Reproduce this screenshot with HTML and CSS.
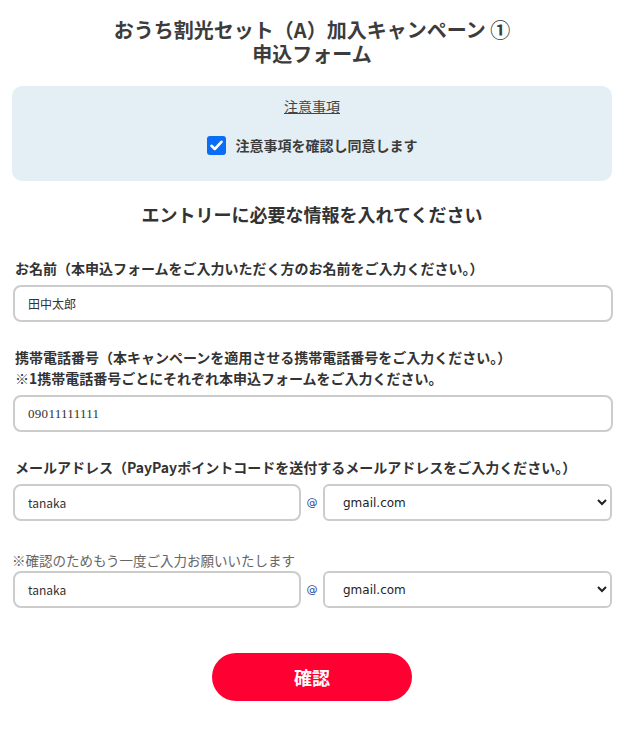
FILE: index.html
```html
<!DOCTYPE html>
<html lang="ja">
<head>
  <meta charset="UTF-8" />
  <meta name="viewport" content="width=device-width, initial-scale=1.0"/>
  <title>申込フォーム</title>
  <link rel="stylesheet" href="styles.css">
</head>
<body>
  <div class="page">
    <h1 class="page-title"><span>おうち割光セット（A）加入キャンペーン ①</span><span>申込フォーム</span></h1>

    <!-- 注意事項 -->
    <div class="notice">
      <a href="#" class="notice-link">注意事項</a>
      <label class="agree">
        <span class="check">
          <svg width="13" height="11" viewBox="0 0 13 11"><path d="M1.5 5.8 L4.8 9 L11.5 1.8" fill="none" stroke="#fff" stroke-width="2.6" stroke-linecap="round" stroke-linejoin="round"/></svg>
        </span>
        注意事項を確認し同意します
      </label>
    </div>

    <h2 class="section-title">エントリーに必要な情報を入れてください</h2>

    <form class="entry-form">
      <div class="field">
        <label class="field-label" for="name">お名前（本申込フォームをご入力いただく方のお名前をご入力ください。）</label>
        <input type="text" id="name" class="text-input" value="田中太郎" />
      </div>

      <div class="field">
        <label class="field-label" for="tel">携帯電話番号（本キャンペーンを適用させる携帯電話番号をご入力ください。）<br>※1携帯電話番号ごとにそれぞれ本申込フォームをご入力ください。</label>
        <input type="tel" id="tel" class="text-input tel-input" value="09011111111" />
      </div>

      <div class="field">
        <label class="field-label" for="mail">メールアドレス（PayPayポイントコードを送付するメールアドレスをご入力ください。）</label>
        <div class="mail-row">
          <input type="text" id="mail" class="text-input mail-input" value="tanaka" />
          <span class="at">@</span>
          <select class="domain">
            <option>gmail.com</option>
            <option>yahoo.co.jp</option>
            <option>icloud.com</option>
          </select>
        </div>
      </div>

      <div class="field field-confirm">
        <p class="note">※確認のためもう一度ご入力お願いいたします</p>
        <div class="mail-row">
          <input type="text" class="text-input mail-input" value="tanaka" />
          <span class="at">@</span>
          <select class="domain">
            <option>gmail.com</option>
            <option>yahoo.co.jp</option>
            <option>icloud.com</option>
          </select>
        </div>
      </div>

      <div class="actions">
        <button type="submit" class="submit-btn">確認</button>
      </div>
    </form>
  </div>
</body>
</html>
```

FILE: styles.css
```css
/* General */
body {
  font-family: 'Noto Sans CJK JP', 'Noto Sans', sans-serif;
  background-color: #fff;
  margin: 0;
  padding: 0;
  color: #333;
}

.page {
  width: 600px;
  margin-left: 12px;
  padding-top: 18px;
}

.page-title {
  margin: 0;
  text-align: center;
  font-size: 20px;
  font-weight: 700;
  color: #3c3c3c;
}

.page-title span {
  display: block;
  height: 24px;
  line-height: 24px;
}

/* Notice box */
.notice {
  margin-top: 20px;
  height: 95px;
  box-sizing: border-box;
  padding-top: 7px;
  background-color: #e3eff4;
  border-radius: 10px;
  text-align: center;
}

.notice-link {
  display: inline-block;
  font-size: 14px;
  line-height: 20px;
  color: #444;
  text-decoration: underline;
}

.agree {
  display: flex;
  justify-content: center;
  align-items: center;
  gap: 10px;
  margin-top: 18px;
  font-size: 14px;
  font-weight: 700;
  color: #3c3c3c;
}

.check {
  width: 19px;
  height: 19px;
  border-radius: 3px;
  background-color: #0b6cf5;
  display: flex;
  align-items: center;
  justify-content: center;
}

/* Section heading */
.section-title {
  margin: 20px 0 0;
  text-align: center;
  font-size: 18px;
  line-height: 26px;
  font-weight: 700;
  color: #333;
}

/* Form */
.entry-form {
  margin-top: 31px;
}

.field {
  margin-bottom: 25px;
}

.field-label {
  display: block;
  padding-left: 3px;
  font-size: 14px;
  line-height: 21px;
  font-weight: 700;
  color: #333;
  margin-bottom: 6px;
}

.text-input {
  display: block;
  width: 100%;
  height: 37px;
  box-sizing: border-box;
  margin-left: 1px;
  padding: 0 13px;
  border: 2px solid #cccccc;
  border-radius: 8px;
  font-family: 'Noto Sans CJK JP', sans-serif;
  font-size: 12px;
  color: #333;
  background: #fff;
}

.tel-input {
  font-family: 'Liberation Serif', serif;
  font-size: 13px;
  letter-spacing: 0.3px;
}

.mail-row {
  display: flex;
  align-items: center;
  gap: 5px;
}

.mail-input {
  flex: 0 0 288px;
  width: 288px;
}

.at {
  font-family: 'DejaVu Sans', sans-serif;
  font-size: 11px;
  color: #1e3f9a;
  width: 12px;
  text-align: center;
}

.domain {
  flex: 1;
  height: 37px;
  padding: 0 10px 0 14px;
  border: 2px solid #cccccc;
  border-radius: 6px;
  font-family: 'DejaVu Sans', sans-serif;
  font-size: 12px;
  color: #222;
  background-color: #fff;
}

.field-confirm {
  margin-top: 29px;
}

.note {
  margin: 0 0 1px;
  font-size: 13.5px;
  line-height: 20px;
  color: #666;
}

/* Button */
.actions {
  display: flex;
  justify-content: center;
  margin-top: 45px;
}

.submit-btn {
  width: 200px;
  height: 48px;
  border: none;
  border-radius: 24px;
  background-color: #ff0033;
  color: #fff;
  font-family: 'Noto Sans CJK JP', sans-serif;
  font-size: 18px;
  font-weight: 700;
  cursor: pointer;
}
```
